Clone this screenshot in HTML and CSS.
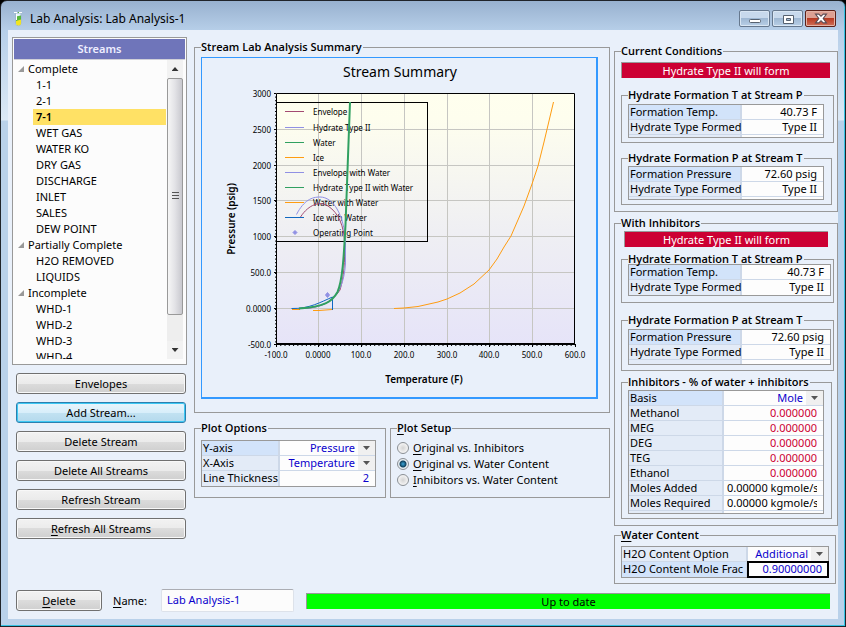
FILE: index.html
```html
<!DOCTYPE html>
<html lang="en">
<head>
<meta charset="utf-8">
<title>Lab Analysis: Lab Analysis-1</title>
<link rel="stylesheet" href="styles.css">
</head>
<body>
<div class="window">
  <header class="titlebar">
    <svg class="app-icon" width="10" height="16" viewBox="0 0 10 16" aria-hidden="true">
      <path d="M1.500 2v10a2.500 2.500 0 0 0 5.500 0V2z" fill="#e4f2fa" stroke="#9fb9cc"/>
      <path d="M2 6.500h5V12a2 2 0 0 1-5 0z" fill="#f2e420"/>
      <path d="M2 5.500l5-1v4l-5 1.500z" fill="#58b83c"/>
      <path d="M0 1.500h3M5 1.500h3M2.500 3v6" stroke="#fff"/>
      <path d="M4 1.500h1" stroke="#58b83c"/>
    </svg>
    <h1 class="title">Lab Analysis: Lab Analysis-1</h1>
    <div class="caption-buttons">
      <button class="caption" type="button" aria-label="Minimize">
        <svg width="12" height="10" viewBox="0 0 12 10"><rect x="0.500" y="5.500" width="11" height="3" rx="1" fill="#fff" stroke="#56616f"/></svg>
      </button>
      <button class="caption" type="button" aria-label="Maximize">
        <svg width="12" height="10" viewBox="0 0 12 10"><path fill-rule="evenodd" d="M1.500 1.500h10v8h-10zM4.500 4.500v2h4v-2z" fill="#fff" stroke="#56616f"/></svg>
      </button>
      <button class="caption close" type="button" aria-label="Close">
        <svg width="14" height="11" viewBox="0 0 12 10"><path d="M1 1h3l2 2 2-2h3l-3 4 3 4H8L6 7 4 9H1l3-4z" fill="#fff" stroke="#5a4a52"/></svg>
      </button>
    </div>
  </header>

  <main class="client">
    <div class="columns">
      <section class="left">
        <div class="tree-panel">
          <h2 class="tree-head">Streams</h2>
          <div class="tree-body">
            <ul class="tree">
              <li class="branch">Complete</li>
              <li class="leaf">1-1</li>
              <li class="leaf">2-1</li>
              <li class="leaf selected">7-1</li>
              <li class="leaf">WET GAS</li>
              <li class="leaf">WATER KO</li>
              <li class="leaf">DRY GAS</li>
              <li class="leaf">DISCHARGE</li>
              <li class="leaf">INLET</li>
              <li class="leaf">SALES</li>
              <li class="leaf">DEW POINT</li>
              <li class="branch">Partially Complete</li>
              <li class="leaf">H2O REMOVED</li>
              <li class="leaf">LIQUIDS</li>
              <li class="branch">Incomplete</li>
              <li class="leaf">WHD-1</li>
              <li class="leaf">WHD-2</li>
              <li class="leaf">WHD-3</li>
              <li class="leaf">WHD-4</li>
            </ul>
            <div class="scrollbar" aria-hidden="true">
              <span class="scroll-arrow up"></span>
              <span class="thumb"></span>
              <span class="scroll-arrow down"></span>
            </div>
          </div>
        </div>
        <div class="actions">
          <button class="btn" type="button">Envelopes</button>
          <button class="btn hot" type="button">Add Stream...</button>
          <button class="btn" type="button">Delete Stream</button>
          <button class="btn" type="button">Delete All Streams</button>
          <button class="btn" type="button">Refresh Stream</button>
          <button class="btn" type="button"><u>R</u>efresh All Streams</button>
        </div>
      </section>

      <section class="middle">
        <fieldset class="group summary">
          <legend>Stream Lab Analysis Summary</legend>
          <div class="chart">
            <svg class="plot" viewBox="202 58 394 339" role="img" aria-label="Stream Summary">
              <defs>
                <linearGradient id="sky" x1="0" y1="0" x2="0" y2="1">
                  <stop offset="0" stop-color="#ffffee"/>
                  <stop offset="0.100" stop-color="#fefeee"/>
                  <stop offset="0.550" stop-color="#efeff3"/>
                  <stop offset="1" stop-color="#e6e4f8"/>
                </linearGradient>
              </defs>
              <text class="chart-title" x="400" y="77">Stream Summary</text>
              <rect x="276" y="93" width="299" height="250" fill="url(#sky)"/>
              <path class="grid" d="M318.500 93v250M361.500 93v250M404.500 93v250M447.500 93v250M489.500 93v250M532.500 93v250M276 129.500h299M276 165.500h299M276 200.500h299M276 236.500h299M276 272.500h299M276 308.500h299"/>
              <path class="axis" d="M276.500 344V93.500H574.500V344M274 93.500h2M274 129.500h2M274 165.500h2M274 200.500h2M274 236.500h2M274 272.500h2M274 308.500h2M274 344.500h2M276.500 344v3M318.500 344v3M361.500 344v3M404.500 344v3M447.500 344v3M489.500 344v3M532.500 344v3M575.500 344v3"/>
              <path class="minor" d="M275.500 93V344" stroke-dasharray="1 2.600"/>
              <path class="minor" d="M276 345.500H575" stroke-dasharray="1 3.270"/>
              <path d="M276 344H575" stroke="#000" stroke-width="2"/>
              <rect x="276.500" y="102.500" width="151" height="139" fill="none" stroke="#000"/>

              <g class="key">
                <path class="maroon" d="M285 111.500h19"/><text x="313" y="115">Envelope</text>
                <path class="violet" d="M285 127.500h19"/><text x="313" y="131">Hydrate Type II</text>
                <path class="green" d="M285 142.500h19"/><text x="313" y="146">Water</text>
                <path class="orange" d="M285 157.500h19"/><text x="313" y="161">Ice</text>
                <path class="violet" d="M285 172.500h19"/><text x="313" y="176">Envelope with Water</text>
                <path class="green" d="M285 187.500h19"/><text x="313" y="191">Hydrate Type II with Water</text>
                <path class="orange" d="M285 202.500h19"/><text x="313" y="206">Water with Water</text>
                <path class="blue" d="M285 217.500h19"/><text x="313" y="221">Ice with Water</text>
                <path class="dot" d="M295 230.500l2 2-2 2-2-2z"/><text x="313" y="236">Operating Point</text>
              </g>

              <g class="curves">
                <path class="orange" d="M292 309.500h8M313 310.500h6L332 309.500"/>
                <path class="maroon" d="M300.500 217C309 204 320 201 328 206C339 213 344 227 344.500 242C345 262 344 277 340 290C332 302 322 307 305 308.500"/>
                <path class="violet" d="M296.500 214.500C304 200 312 197 320 197C333 197 344 214 345.500 242V264C344 283 339 293 331 300C325 305 315 308 305 308.500"/>
                <path class="blue" d="M291.500 308.500C309 309 321 302 332.500 297V310"/>
                <path class="green wide" d="M299 308.500C324 307 332 302 337.500 292C343 279 344 252 345.500 225L350 102"/>
                <path class="orange" d="M394 308.500L404 308L418 306.500L438 302L447 299L460 293L474 284L489 270L497 259L504 247L511 236L524 206L532 184L538 166L544 142L553.500 102"/>
                <path class="dot" d="M327.500 292.500l2 2.500-2 2.500-2-2.500z"/>
              </g>

              <g class="ticks y">
                <text x="271" y="97">3000</text>
                <text x="271" y="133">2500</text>
                <text x="271" y="169">2000</text>
                <text x="271" y="204">1500</text>
                <text x="271" y="240">1000</text>
                <text x="271" y="276">500.0</text>
                <text x="271" y="312">0.0000</text>
                <text x="271" y="348">-500.0</text>
              </g>
              <g class="ticks">
                <text x="276" y="358">-100.0</text>
                <text x="318" y="358">0.0000</text>
                <text x="361" y="358">100.0</text>
                <text x="404" y="358">200.0</text>
                <text x="447" y="358">300.0</text>
                <text x="489" y="358">400.0</text>
                <text x="532" y="358">500.0</text>
                <text x="575" y="358">600.0</text>
              </g>
              <text class="axis-name" x="424" y="383">Temperature (F)</text>
              <text class="axis-name" transform="translate(235 219) rotate(-90)">Pressure (psig)</text>
            </svg>
          </div>
        </fieldset>

        <div class="plot-row">
          <fieldset class="group options">
            <legend>Plot Options</legend>
            <table class="sheet">
              <tr class="active"><th><label for="yaxis">Y-axis</label></th><td><span class="pick"><select id="yaxis"><option>Pressure</option></select></span></td></tr>
              <tr><th><label for="xaxis">X-Axis</label></th><td><span class="pick"><select id="xaxis"><option>Temperature</option></select></span></td></tr>
              <tr><th><label for="thick">Line Thickness</label></th><td><input class="cell" id="thick" value="2"></td></tr>
            </table>
          </fieldset>
          <fieldset class="group setup">
            <legend><u>P</u>lot Setup</legend>
            <label class="radio"><input type="radio" name="setup"><span><u>O</u>riginal vs. Inhibitors</span></label>
            <label class="radio"><input type="radio" name="setup" checked><span><u>O</u>riginal vs. Water Content</span></label>
            <label class="radio"><input type="radio" name="setup"><span><u>I</u>nhibitors vs. Water Content</span></label>
          </fieldset>
        </div>
      </section>

      <section class="right">
        <fieldset class="group current">
          <legend>Current Conditions</legend>
          <p class="alert">Hydrate Type II will form</p>
          <fieldset class="group sub">
            <legend>Hydrate Formation T at Stream P</legend>
            <table class="sheet">
              <tr class="active"><th>Formation Temp.</th><td>40.73 F</td></tr>
              <tr><th>Hydrate Type Formed</th><td>Type II</td></tr>
              <tr class="filler"><th></th><td></td></tr>
            </table>
          </fieldset>
          <fieldset class="group sub slim">
            <legend>Hydrate Formation P at Stream T</legend>
            <table class="sheet">
              <tr class="active"><th>Formation Pressure</th><td>72.60 psig</td></tr>
              <tr><th>Hydrate Type Formed</th><td>Type II</td></tr>
              <tr class="filler"><th></th><td></td></tr>
            </table>
          </fieldset>
        </fieldset>

        <fieldset class="group inhibited">
          <legend>With Inhibitors</legend>
          <p class="alert">Hydrate Type II will form</p>
          <fieldset class="group sub tight">
            <legend>Hydrate Formation T at Stream P</legend>
            <table class="sheet">
              <tr class="active"><th>Formation Temp.</th><td>40.73 F</td></tr>
              <tr><th>Hydrate Type Formed</th><td>Type II</td></tr>
            </table>
          </fieldset>
          <fieldset class="group sub roomy">
            <legend>Hydrate Formation P at Stream T</legend>
            <table class="sheet">
              <tr class="active"><th>Formation Pressure</th><td>72.60 psig</td></tr>
              <tr><th>Hydrate Type Formed</th><td>Type II</td></tr>
              <tr class="filler tall"><th></th><td></td></tr>
            </table>
          </fieldset>
          <fieldset class="group sub slim dose">
            <legend>Inhibitors - % of water + inhibitors</legend>
            <table class="sheet">
              <tr class="active"><th><label for="basis">Basis</label></th><td><span class="pick"><select id="basis"><option>Mole</option></select></span></td></tr>
              <tr><th><label for="meoh">Methanol</label></th><td><input class="cell red" id="meoh" value="0.000000"></td></tr>
              <tr><th><label for="meg">MEG</label></th><td><input class="cell red" id="meg" value="0.000000"></td></tr>
              <tr><th><label for="deg">DEG</label></th><td><input class="cell red" id="deg" value="0.000000"></td></tr>
              <tr><th><label for="teg">TEG</label></th><td><input class="cell red" id="teg" value="0.000000"></td></tr>
              <tr><th><label for="etoh">Ethanol</label></th><td><input class="cell red" id="etoh" value="0.000000"></td></tr>
              <tr><th>Moles Added</th><td><span class="clip">0.00000 kgmole/s</span></td></tr>
              <tr><th>Moles Required</th><td><span class="clip">0.00000 kgmole/s</span></td></tr>
              <tr class="filler"><th></th><td></td></tr>
            </table>
          </fieldset>
        </fieldset>

        <fieldset class="group water">
          <legend><u>W</u>ater Content</legend>
          <table class="sheet">
            <tr><th><label for="h2o">H2O Content Option</label></th><td><span class="pick"><select id="h2o"><option>Additional</option></select></span></td></tr>
            <tr class="active"><th><label for="frac">H2O Content Mole Frac</label></th><td class="focus"><input class="cell" id="frac" value="0.90000000"></td></tr>
          </table>
        </fieldset>
      </section>
    </div>

    <footer class="bottom">
      <button class="btn delete" type="button"><u>D</u>elete</button>
      <label class="name-label" for="name"><u>N</u>ame:</label>
      <input class="name" id="name" value="Lab Analysis-1">
      <output class="status">Up to date</output>
    </footer>
  </main>
</div>
</body>
</html>
```
FILE: styles.css
```css
* { box-sizing: border-box; }

body {
  margin: 0;
  background: #000;
  color: #000;
  font: 11px/14px "Noto Sans", "Open Sans", sans-serif;
}

button, input, select { font: inherit; color: inherit; margin: 0; }
u { text-underline-offset: 2px; }

/* Window frame */
.window {
  display: flex;
  flex-direction: column;
  min-height: 100vh;
  padding: 0 7px;
  border: 1px solid #20242a;
  border-radius: 7px 7px 0 0;
  background: linear-gradient(#98b1cf 0, #b7cfe9 30px, #dce9f6 119px, #b9d1ea 120px);
  box-shadow: inset -1px -1px 0 #35c3e3;
}

.titlebar {
  display: flex;
  align-items: center;
  height: 29px;
  padding: 6px 2px 0 6px;
}
.app-icon { flex: none; }
.title { flex: 1; margin: 0 0 0 6px; font-size: 12px; font-weight: 400; line-height: 16px; }
.caption-buttons { display: flex; gap: 2px; }
.caption {
  display: flex;
  align-items: center;
  justify-content: center;
  width: 31px;
  height: 17px;
  padding: 0;
  border: 1px solid #66788e;
  border-radius: 2px;
  background: linear-gradient(#c8d9ec 0 45%, #9fb8d3 50%, #b9cfe6);
  box-shadow: inset 0 0 0 1px #d9e6f3;
}
.close {
  border-color: #5c2018;
  background: linear-gradient(#dda093 0 45%, #b83a22 50%, #d0705a);
  box-shadow: inset 0 0 0 1px #e3b3a6;
}

.client {
  flex: 1;
  display: flex;
  flex-direction: column;
  margin-bottom: 6px;
  padding: 7px 0 7px 4px;
  background: #e9f0fa;
}
.window { padding-bottom: 1px; }
.columns { display: flex; align-items: flex-start; }

/* Streams tree */
.left { flex: none; width: 175px; }
.tree-panel { padding: 1px; border: 1px solid #999; background: #fcfcfc; }
.tree-head {
  margin: 0;
  border-bottom: 1px solid #d0d0d8;
  background: #6f75ba;
  color: #eef;
  font-size: 11px;
  font-weight: 600;
  line-height: 20px;
  text-align: center;
}
.tree-body { display: flex; height: 299px; margin-bottom: 4px; padding-right: 2px; overflow: hidden; }
.tree { flex: 1; margin: 0; padding: 1px 1px 0 19px; list-style: none; }
.tree li { height: 16px; line-height: 16px; padding-left: 3px; white-space: nowrap; }
.tree .branch { margin-left: -16px; padding-left: 1px; }
.branch::before {
  content: "";
  display: inline-block;
  width: 6px;
  height: 6px;
  margin-right: 4px;
  background: #999;
  clip-path: polygon(100% 0, 100% 100%, 0 100%);
  vertical-align: 1px;
}
.tree .selected { background: #ffe165; font-weight: 600; }
.scrollbar { display: flex; flex-direction: column; width: 16px; background: #eee; }
.scroll-arrow { height: 18px; background: #f2f2f2; }
.scroll-arrow::before {
  content: "";
  display: block;
  width: 7px;
  height: 4px;
  margin: 7px auto 0;
  background: #333;
  clip-path: polygon(50% 0, 100% 100%, 0 100%);
}
.down { margin-top: auto; }
.down::before { clip-path: polygon(0 0, 100% 0, 50% 100%); }
.thumb {
  height: 237px;
  border: 1px solid #999;
  border-radius: 2px;
  background:
    repeating-linear-gradient(#555 0 1px, transparent 1px 3px) center / 7px 9px no-repeat,
    linear-gradient(90deg, #f6f6f6, #e2e2e6 50%, #c8c8ce);
}

/* Buttons */
.actions { display: flex; flex-direction: column; gap: 8px; padding: 8px 1px 0 4px; }
.btn {
  height: 21px;
  padding: 0;
  border: 1px solid #707070;
  border-radius: 3px;
  background: linear-gradient(#f2f2f2 0, #ebebeb 50%, #dcdcdc 50%, #cfcfcf);
  box-shadow: inset 0 0 0 1px #f8f8f8;
  line-height: 18px;
}
.hot {
  border-color: #2c7fae;
  background: linear-gradient(#e8f5fc, #d8eefa 50%, #c2e2f2 50%, #b4d9ec);
  box-shadow: inset 0 0 0 1px #3cc8f4;
}

/* Group boxes */
.group { min-width: 0; margin: 0; border: 1px solid #999; }
.group > legend {
  padding: 0 1px 0 0;
  font-family: "Open Sans", "Noto Sans", sans-serif;
  font-weight: 600;
  font-size: 11px;
  line-height: 14px;
  white-space: nowrap;
}

.middle { flex: 1; min-width: 0; margin: 3px 4px 0 7px; }
.summary { padding: 3px 11px 13px 6px; }
.chart { border: solid #3399ff; border-width: 1px 2px 2px 1px; }
.plot { display: block; width: 100%; height: auto; }
.plot-row { display: grid; grid-template-columns: 192fr 220fr; gap: 4px; margin-top: 8px; }
.options { padding: 5px 9px 10px 6px; }
.setup { padding: 5px 6px 7px; }

.radio { display: flex; align-items: center; gap: 4px; height: 16px; }
.radio input {
  appearance: none;
  width: 12px;
  height: 12px;
  border: 1px solid #8a8f94;
  border-radius: 50%;
  background: radial-gradient(#d4d4d4, #f4f4f4 70%);
}
.radio input:checked { background: radial-gradient(circle, #3ca8dc 0, #10425f 3px, #e8eef2 4px); }

/* Chart */
.plot text { font-family: "Noto Sans", "Open Sans", sans-serif; }
.chart-title { font-size: 14px; text-anchor: middle; }
.axis-name { font-size: 10px; font-weight: 600; text-anchor: middle; }
.ticks text { font-size: 8px; text-anchor: middle; }
.ticks.y text { text-anchor: end; }
.key text { font-size: 8px; }
.key path, .curves path { fill: none; }
.grid { fill: none; stroke: #c6c6c2; }
.axis, .minor { fill: none; stroke: #000; }
.maroon { stroke: #a34a72; }
.violet { stroke: #9090e4; }
.green { stroke: #30a060; }
.orange { stroke: #ff9c10; }
.blue { stroke: #1068c0; }
.wide { stroke-width: 2; }
.plot .dot { fill: #9090e4; stroke: #9090e4; }

/* Property tables */
.sheet {
  width: 100%;
  table-layout: fixed;
  border: 1px solid #999;
  border-spacing: 0;
  background: #fdfdfd;
}
.sheet th, .sheet td {
  height: 15px;
  padding: 0;
  border-bottom: 1px solid #cdd8e8;
  line-height: 14px;
  vertical-align: top;
  white-space: nowrap;
}
.sheet tr:last-child > * { border-bottom: 0; }
.sheet th {
  width: 113px;
  padding-left: 1px;
  border-right: 2px solid #cdd8e8;
  background: #e3ebf7;
  font-weight: 400;
  text-align: left;
}
.sheet .active th { background: #d2e3fa; }
.sheet td { padding-right: 6px; text-align: right; }
.sheet .filler > * { height: 2px; line-height: 0; }
.sheet .tall > * { height: 4px; }
.sheet td:has(.pick) { padding-right: 0; }
.options .sheet th { width: 78px; }
.dose .sheet th { width: 95px; }
.water .sheet th { width: 126px; }

.pick { position: relative; display: block; color: #0a00cc; }
.pick select {
  display: block;
  appearance: none;
  width: 100%;
  height: 14px;
  padding: 0 20px 0 0;
  border: 0;
  border-radius: 0;
  background: linear-gradient(#f0f0f0, #f0f0f0) right / 17px 100% no-repeat;
  text-align: right;
  text-align-last: right;
}
.pick::after {
  content: "";
  position: absolute;
  top: 5px;
  right: 5px;
  width: 7px;
  height: 4px;
  background: #555;
  clip-path: polygon(0 0, 100% 0, 50% 100%);
}
.cell {
  display: block;
  width: 100%;
  height: 14px;
  padding: 0;
  border: 0;
  background: none;
  color: #0a00cc;
  text-align: right;
}
.red { color: #cc0033; }
.clip { display: block; width: 90px; margin-left: auto; overflow: hidden; text-align: left; }
.focus { outline: 2px solid #000; outline-offset: -1px; }

/* Right column */
.right { flex: none; width: 224px; margin-top: 7px; }
.alert {
  margin: 0;
  height: 16px;
  border: solid #999;
  border-width: 1px 0 0 1px;
  background: #cc0033;
  color: #fff;
  line-height: 15px;
  text-align: center;
}
.current { padding: 4px 3px 6px 6px; }
.current .alert { margin: 0 4px 10px 0; }
.sub { padding: 2px 9px 4px 6px; }
.slim { margin-right: 2px; padding: 1px 7px 4px 6px; }
.current .slim { margin-top: 8px; }
.inhibited { margin-top: 4px; padding: 1px 3px 6px 6px; }
.inhibited .alert { margin: 0 6px 5px 3px; }
.tight { padding: 0 2px 6px 6px; }
.tight .sheet { margin-top: -2px; }
.roomy { margin-top: 10px; padding: 2px 2px 5px 6px; }
.dose { margin-top: 4px; }
.water { margin: 2px 2px 0 0; padding: 4px 6px 5px; }

/* Footer */
.bottom { display: flex; align-items: center; margin-top: auto; padding: 0 8px 0 4px; }
.delete { width: 86px; }
.name-label { width: 48px; margin-left: 11px; }
.name {
  width: 133px;
  height: 23px;
  margin: 0 12px 0 0;
  padding: 0 5px 3px;
  border: 1px solid #dde2ea;
  border-top-color: #abadb3;
  border-radius: 2px;
  background: #fcfcfc;
  color: #0a00cc;
}
.status {
  flex: 1;
  height: 16px;
  border: solid #999;
  border-width: 1px 0 0 1px;
  background: #0f0;
  line-height: 15px;
  text-align: center;
}
```
